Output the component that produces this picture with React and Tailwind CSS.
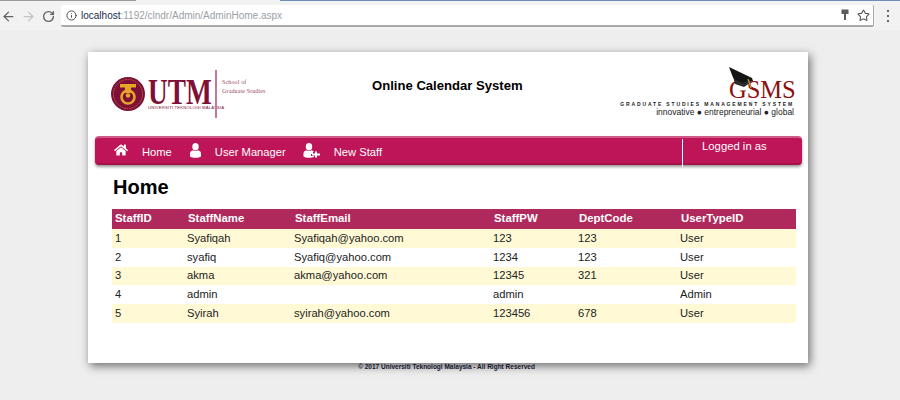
import { ArrowLeft, ArrowRight, RotateCw, Info, Star } from "lucide-react";
import { FaHome } from "react-icons/fa";

const staff = [
  ["1", "Syafiqah", "Syafiqah@yahoo.com", "123", "123", "User"],
  ["2", "syafiq", "Syafiq@yahoo.com", "1234", "123", "User"],
  ["3", "akma", "akma@yahoo.com", "12345", "321", "User"],
  ["4", "admin", "", "admin", "", "Admin"],
  ["5", "Syirah", "syirah@yahoo.com", "123456", "678", "User"],
];

const headers = ["StaffID", "StaffName", "StaffEmail", "StaffPW", "DeptCode", "UserTypeID"];

function UserIcon() {
  return (
    <svg width="11" height="15" viewBox="0 0 11 15" fill="white" className="block">
      <ellipse cx="5.5" cy="3.7" rx="3.2" ry="3.7" />
      <path d="M0 13.5 V10.5 C0 8.5 1.5 7.6 3 7.2 C4.5 8.4 6.5 8.4 8 7.2 C9.5 7.6 11 8.5 11 10.5 V13.5 C9 15.2 2 15.2 0 13.5 Z" />
    </svg>
  );
}

function UserPlusIcon() {
  return (
    <svg width="17" height="15" viewBox="0 0 17 15" fill="white" className="block">
      <ellipse cx="6" cy="3.7" rx="3.2" ry="3.7" />
      <path d="M0.5 13.5 V10.5 C0.5 8.5 2 7.6 3.5 7.2 C5 8.4 7 8.4 8.5 7.2 C9.5 7.5 10.5 8 11 9 H10 V11 H8 V13 H11 V13.7 C9 15.2 2.5 15.2 0.5 13.5 Z" />
      <path d="M12 8.5 H14 V10.5 H17 V12.5 H14 V14.5 H12 V12.5 H9 V10.5 H12 Z" />
    </svg>
  );
}

function UtmLogo() {
  return (
    <div className="flex items-center h-[48px]">
      <svg width="34" height="36" viewBox="0 0 34 36" className="shrink-0">
        <circle cx="17" cy="18" r="17" fill="#7e1038" />
        <circle cx="17" cy="18" r="14.5" fill="none" stroke="#b5683a" strokeWidth="1" strokeDasharray="1.5 1" />
        <rect x="9" y="8" width="16" height="3.5" fill="#e5a526" />
        <rect x="14" y="11" width="6" height="6" fill="#e5a526" />
        <circle cx="17" cy="21" r="6.5" fill="none" stroke="#e5a526" strokeWidth="2.6" />
        <circle cx="17" cy="19.5" r="2.2" fill="#e5a526" />
      </svg>
      <div className="ml-[3px] w-[64px] shrink-0">
        <div className="w-[64px] h-[26px] text-[36px] leading-[26px] font-['Liberation_Serif',serif] font-bold text-[#7e1038] origin-left scale-x-[0.76] whitespace-nowrap">
          UTM
        </div>
        <div className="text-[4.3px] leading-[5px] text-[#7e1038] font-['Liberation_Sans',sans-serif] whitespace-nowrap tracking-[0.12px]">
          UNIVERSITI TEKNOLOGI MALAYSIA
        </div>
      </div>
      <div className="ml-[3px] w-[2px] h-[48px] bg-[#c27a98]" />
      <div className="ml-[5px] -mt-[15px] text-[6px] leading-[9px] text-[#9a4a68] font-['Liberation_Serif',serif] whitespace-nowrap tracking-[0.15px]">
        School of
        <br />
        Graduate Studies
      </div>
    </div>
  );
}

function GsmsLogo() {
  return (
    <div className="flex flex-col items-end w-[176px]">
      <div className="relative h-[22px] w-[65px] mt-[27px]">
        <div className="text-[24.5px] leading-[22px] font-['Liberation_Serif',serif] text-[#8a1010] whitespace-nowrap">
          GSMS
        </div>
        <svg width="28" height="24" viewBox="0 0 28 24" className="absolute left-0 -top-[12px]">
          <path d="M0 0 L23 11 L24 14 L14 17 L6 15 L3 8 Z" fill="#141414" />
          <path d="M5 12 L6 17 L15 20 L21 16 L21 13 L14 16 Z" fill="#2b2b2b" />
          <path d="M19 12 L22 21" stroke="#c99a2e" strokeWidth="1.2" fill="none" />
        </svg>
      </div>
      <div className="text-[5px] leading-[6px] font-bold text-[#222] tracking-[1.85px] whitespace-nowrap">
        GRADUATE STUDIES MANAGEMENT SYSTEM
      </div>
      <div className="text-[8.5px] leading-[10px] text-[#222] whitespace-nowrap">
        innovative ● entrepreneurial ● global
      </div>
    </div>
  );
}

function NavItem({ icon, label, iconClass, textClass }) {
  return (
    <div className="flex items-center">
      <span className={iconClass}>{icon}</span>
      <span className={textClass}>{label}</span>
    </div>
  );
}

export default function App() {
  return (
    <div className="h-[400px] w-[900px] overflow-hidden bg-[#eeeeee] font-['Liberation_Sans',Arial,sans-serif]">
      {/* tab strip remains */}
      <div className="flex h-[2px] bg-[#f2f2f2]">
        <div className="w-[136px] h-[1px] bg-[#9a9a9a]" />
        <div className="ml-[144px] flex-1 h-[1px] bg-[#6d8fb5]" />
      </div>

      {/* browser toolbar */}
      <div className="flex items-center h-[28px] bg-[#f2f2f2]">
        <div className="flex items-center w-[61px] pl-[1px] gap-[5px]">
          <ArrowLeft size={15} className="text-[#5f6368]" strokeWidth={2} />
          <ArrowRight size={15} className="text-[#c4c4c4]" strokeWidth={2} />
          <RotateCw size={13} className="text-[#5f6368] ml-[1px]" strokeWidth={2.5} />
        </div>
        <div className="flex items-center w-[813px] h-[22px] bg-white border-b-2 border-r border-[#a9a9a9] rounded-[2px]">
          <Info size={11} className="ml-[5px] text-[#444]" strokeWidth={2} />
          <span className="ml-[4px] text-[10px] text-[#202a50] whitespace-nowrap">
            localhost<span className="text-[#9aa0a6]">:1192/clndr/Admin/AdminHome.aspx</span>
          </span>
          <div className="ml-auto flex items-center gap-[8px] pr-[3px]">
            <svg width="8" height="12" viewBox="0 0 8 12">
              <path d="M0.5 0.5 H7.5 V5 H5 V11 H3 V5 H0.5 Z" fill="#5c5c5c" />
            </svg>
            <Star size={13} className="text-[#555]" strokeWidth={2} />
          </div>
        </div>
        <div className="ml-[13px] flex flex-col gap-[3px]">
          <span className="block w-[2px] h-[2px] bg-[#666]" />
          <span className="block w-[2px] h-[2px] bg-[#666]" />
          <span className="block w-[2px] h-[2px] bg-[#666]" />
        </div>
      </div>

      {/* page */}
      <div className="ml-[88px] mt-[22px] w-[720px] h-[311px] bg-white shadow-[2px_3px_9px_rgba(0,0,0,0.55)] pl-[7px] pr-[6px]">
        <div className="flex h-[84px] pt-[18px]">
          <div className="ml-[16px] w-[261px]">
            <UtmLogo />
          </div>
          <div className="w-[151px] pt-[7px] text-[13.1px] leading-[18px] font-bold text-black whitespace-nowrap">
            Online Calendar System
          </div>
          <div className="ml-auto mr-[8px] -mt-[18px]">
            <GsmsLogo />
          </div>
        </div>

        {/* nav bar */}
        <div className="flex items-center h-[29px] w-[707px] bg-[#be1558] rounded-[4px] border-t-2 border-t-[#cf5a86] border-b-2 border-b-[#a81049] shadow-[0_2px_3px_rgba(0,0,0,0.4)] text-white text-[11.2px]">
          <NavItem icon={<FaHome size={14} />} label="Home" iconClass="ml-[19px]" textClass="ml-[14px] mt-[3px]" />
          <NavItem icon={<UserIcon />} label="User Manager" iconClass="ml-[18px]" textClass="ml-[14px] mt-[3px]" />
          <NavItem icon={<UserPlusIcon />} label="New Staff" iconClass="ml-[17px]" textClass="ml-[14px] mt-[3px]" />
          <div className="ml-[300px] w-[1px] h-[28px] mt-[4px] bg-white" />
          <span className="ml-[19px] -mt-[8px] text-[11.3px]">Logged in as</span>
        </div>

        {/* content */}
        <div className="pl-[17px] w-[701px]">
          <h1 className="mt-[10px] h-[34px] text-[20px] leading-[24px] font-bold text-black pl-[1px]">Home</h1>
          <table className="w-[684px] table-fixed border-collapse text-[11.2px] text-[#222]">
            <colgroup>
              <col className="w-[74px]" />
              <col className="w-[107px]" />
              <col className="w-[199px]" />
              <col className="w-[85px]" />
              <col className="w-[102px]" />
              <col className="w-[117px]" />
            </colgroup>
            <thead>
              <tr className="h-[20px] bg-[#b0295c] text-white text-[11.4px]">
                {headers.map((h, j) => (
                  <th key={h} className={j === 0 ? "pl-[3px] text-left font-bold" : "pl-[2px] text-left font-bold"}>
                    {h}
                  </th>
                ))}
              </tr>
            </thead>
            <tbody>
              {staff.map((row, i) => (
                <tr
                  key={row[0]}
                  className={`${i === 2 ? "h-[18px]" : "h-[19px]"} ${i % 2 === 0 ? "bg-[#fffad5]" : "bg-white"}`}
                >
                  {row.map((cell, j) => (
                    <td key={j} className={j === 0 ? "pl-[3px] pb-[1px] whitespace-nowrap" : "pl-[1px] pb-[1px] whitespace-nowrap"}>
                      {cell}
                    </td>
                  ))}
                </tr>
              ))}
            </tbody>
          </table>
        </div>
      </div>

      <div className="w-[893px] text-center text-[6.5px] leading-[8px] font-bold text-[#14142e] whitespace-nowrap">
        © 2017 Universiti Teknologi Malaysia - All Right Reserved
      </div>
    </div>
  );
}
